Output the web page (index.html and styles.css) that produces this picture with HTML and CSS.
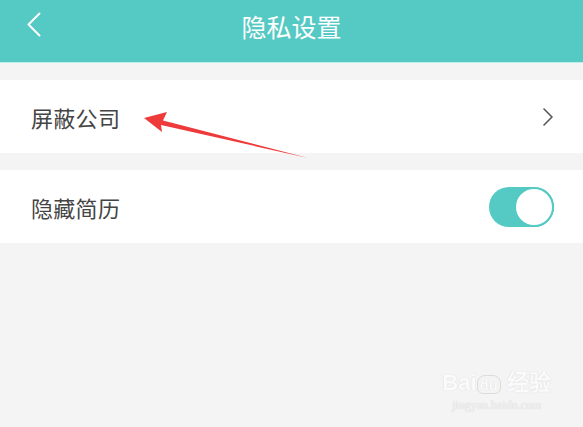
FILE: index.html
```html
<!DOCTYPE html>
<html lang="zh-CN">
<head>
  <meta charset="UTF-8">
  <meta name="viewport" content="width=device-width, initial-scale=1.0">
  <title>隐私设置</title>
  <link rel="stylesheet" href="styles.css">
</head>
<body>
  <header class="topbar">
    <div class="back">
      <svg width="18" height="26" viewBox="0 0 18 26"><path d="M14.5 1.5 L3.5 12.5 L14.5 23.5" fill="none" stroke="#fff" stroke-width="2" stroke-linecap="round" stroke-linejoin="round"/></svg>
    </div>
    <h1 class="title">隐私设置</h1>
    <div class="spacer"></div>
  </header>

  <main class="list">
    <div class="row">
      <span class="label">屏蔽公司</span>
      <svg class="chev" width="12" height="18" viewBox="0 0 12 18"><path d="M2 1 L10 9 L2 17" fill="none" stroke="#555" stroke-width="1.6" stroke-linecap="round" stroke-linejoin="round"/></svg>
    </div>
    <div class="row">
      <span class="label">隐藏简历</span>
      <div class="switch on"><div class="knob"></div></div>
    </div>
  </main>

  <!-- red annotation arrow -->
  <svg class="arrow" width="583" height="427" viewBox="0 0 583 427">
    <polygon points="144,118 167,112 163,120.5 308,158 161,125 162,132" fill="#ee3a3a"/>
  </svg>

  <div class="watermark">
    <div class="wm-logo">Bai<span class="du">du</span> 经验</div>
    <div class="wm-url">jingyan.baidu.com</div>
  </div>
</body>
</html>
```

FILE: styles.css
```css
/* Basic reset */
* { margin: 0; padding: 0; box-sizing: border-box; }
html, body {
  height: 100%;
  background: #f4f4f4;
  font-family: "Noto Sans CJK SC", "Noto Sans", sans-serif;
  color: #3c3c3c;
  overflow: hidden;
}
body { position: relative; }

/* Top bar */
.topbar {
  height: 63px;
  background: #55c9c3;
  border-bottom: 1px solid #bdeeea;
  display: flex;
  align-items: flex-start;
  padding: 11px 22px 0 22px;
}
.back { width: 60px; padding: 1px 0 0 3px; }
.title {
  flex: 1;
  text-align: center;
  font-size: 25px;
  font-weight: normal;
  color: #fff;
  line-height: 30px;
}
.spacer { width: 60px; }

/* List */
.list { padding-top: 17px; display: flex; flex-direction: column; gap: 17px; }
.row {
  height: 73px;
  background: #fff;
  display: flex;
  align-items: center;
  justify-content: space-between;
  padding: 0 29px 0 31px;
}
.label { font-size: 22px; color: #444; letter-spacing: 0.3px; }

/* Toggle */
.switch {
  width: 65px; height: 40px;
  border-radius: 20px;
  background: #55c9c3;
  position: relative;
}
.switch .knob {
  position: absolute;
  right: 0; top: 0;
  width: 40px; height: 40px;
  border-radius: 50%;
  background: #fff;
  border: 2px solid #55c9c3;
}

/* Annotation */
.arrow { position: absolute; left: 0; top: 0; pointer-events: none; }

/* Watermark */
.watermark {
  position: absolute;
  right: 32px; bottom: 14px;
  text-align: center;
  color: #fbfbfb;
  text-shadow: 0 0 1px #cfcfcf;
}
.wm-logo { font-family: "Liberation Sans", Arial, sans-serif; font-size: 22px; font-weight: bold; line-height: 26px; }
.wm-logo .du { font-size: 15px; border: 1px solid #dcdcdc; border-radius: 8px 8px 6px 6px; padding: 0 2px; }
.wm-url { font-family: "Liberation Serif", serif; font-size: 12px; color: #f2f2f2; text-shadow: 0 0 1px #c8c8c8; }
```
